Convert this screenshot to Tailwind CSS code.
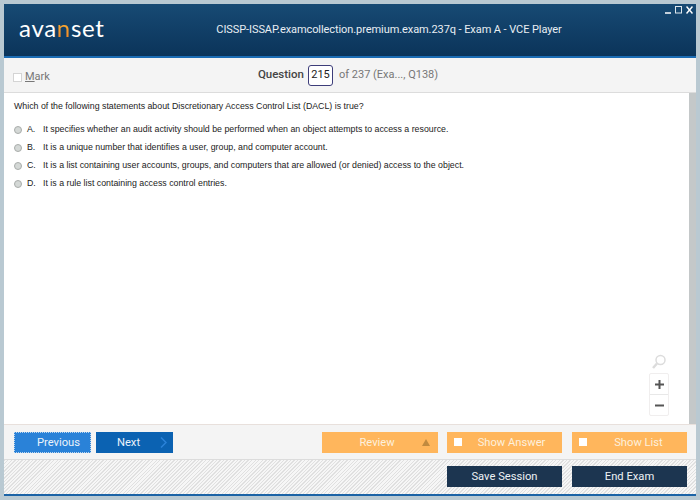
<!DOCTYPE html>
<html lang="en">
<head>
    <meta charset="UTF-8">
    <title>VCE Player</title>
    <script src="https://cdn.jsdelivr.net/npm/@tailwindcss/browser@4"></script>
</head>
<body class="w-[700px] h-[500px] overflow-hidden bg-[#b9c9d2] font-['Roboto',sans-serif]">
    <div class="h-[500px] pt-1 pl-1 pr-1 pb-[4px] flex flex-col">
        <!-- title bar -->
        <header class="relative h-[54px] shrink-0 flex items-center bg-gradient-to-b from-[#174a74] to-[#0b345a] border-b-2 border-[#1b6cb4]">
            <div class="w-[212px] pl-[15px] text-[24px] leading-none text-white font-['Lato',sans-serif] font-normal tracking-[0.7px] pb-1">ava<span class="text-transparent bg-clip-text bg-gradient-to-b from-[#f9c23c] to-[#ef7d22]">n</span>set</div>
            <div class="w-[346px] pt-[1px] text-center text-[11px] tracking-[-0.08px] text-[#e8eef3] whitespace-nowrap">CISSP-ISSAP.examcollection.premium.exam.237q - Exam A - VCE Player</div>
            <div class="absolute top-[2px] right-[3px] flex items-center gap-[4px]">
                <svg width="6" height="8" viewBox="0 0 6 8"><path d="M0 7h6" stroke="#fff" stroke-width="1.5"/></svg>
                <svg width="7" height="8" viewBox="0 0 7 8"><rect x="0.5" y="0.5" width="6" height="6.5" fill="none" stroke="#dfe8ee"/></svg>
                <svg width="7" height="8" viewBox="0 0 7 8"><path d="M0.5 0.5l6 7M6.5 0.5l-6 7" stroke="#fff" stroke-width="1.5"/></svg>
            </div>
        </header>

        <!-- question toolbar -->
        <div class="relative h-[35px] shrink-0 flex items-center justify-center bg-[#f4f4f4] border-b border-[#dcdcdc]">
            <div class="absolute left-[9px] top-[11px] flex items-center gap-[3px] text-[11px] text-[#777]">
                <span class="w-[9px] h-[9px] bg-white border border-[#d4d4d4]"></span>
                <span><u>M</u>ark</span>
            </div>
            <div class="flex items-center text-[11px] text-[#777] ml-[-4px]">
                <span class="text-[11.5px] font-medium text-[#444]">Question</span>
                <span class="ml-[4px] w-[25px] h-[21px] flex items-center justify-center bg-white border border-[#3d3d7a] rounded-[3px] text-[#222]">215</span>
                <span class="ml-[6px]">of 237 (Exa..., Q138)</span>
            </div>
        </div>

        <!-- question body -->
        <main class="relative flex-1 flex bg-white min-h-0">
            <div class="flex-1 pl-[10px] pt-[7px] font-['Liberation_Sans',sans-serif] text-[8.8px] text-[#222]">
                <p class="h-[21px] leading-[13px]">Which of the following statements about Discretionary Access Control List (DACL) is true?</p>
                <div class="flex flex-col">
                    <div class="h-[18px] flex items-center gap-[5px]"><span class="w-[8px] h-[8px] rounded-full bg-[#d4d8d6] border border-[#a9adab]"></span><span class="w-[10px]">A.</span><span class="ml-[1px]">It specifies whether an audit activity should be performed when an object attempts to access a resource.</span></div>
                    <div class="h-[18px] flex items-center gap-[5px]"><span class="w-[8px] h-[8px] rounded-full bg-[#d4d8d6] border border-[#a9adab]"></span><span class="w-[10px]">B.</span><span class="ml-[1px]">It is a unique number that identifies a user, group, and computer account.</span></div>
                    <div class="h-[18px] flex items-center gap-[5px]"><span class="w-[8px] h-[8px] rounded-full bg-[#d4d8d6] border border-[#a9adab]"></span><span class="w-[10px]">C.</span><span class="ml-[1px]">It is a list containing user accounts, groups, and computers that are allowed (or denied) access to the object.</span></div>
                    <div class="h-[18px] flex items-center gap-[5px]"><span class="w-[8px] h-[8px] rounded-full bg-[#d4d8d6] border border-[#a9adab]"></span><span class="w-[10px]">D.</span><span class="ml-[1px]">It is a rule list containing access control entries.</span></div>
                </div>
            </div>
            <!-- zoom controls -->
            <div class="absolute right-[27px] bottom-[8px] flex flex-col items-center">
                <svg width="16" height="16" viewBox="0 0 16 16" class="mb-[3px]"><circle cx="9.5" cy="6" r="4.5" fill="none" stroke="#dcdcdc" stroke-width="1.5"/><path d="M6 9.5L2 14" stroke="#dcdcdc" stroke-width="2.5"/></svg>
                <div class="w-[20px] h-[43px] bg-white border border-[#f0eeee] rounded-[2px] flex flex-col text-[#555]">
                    <div class="h-[21px] border-b border-[#e8e8e8] flex items-center justify-center"><svg width="9" height="9" viewBox="0 0 9 9"><path d="M4.5 0v9M0 4.5h9" stroke="#555" stroke-width="2"/></svg></div>
                    <div class="flex-1 flex items-center justify-center"><svg width="9" height="9" viewBox="0 0 9 9"><path d="M0 4.5h9" stroke="#555" stroke-width="2"/></svg></div>
                </div>
            </div>
            <div class="w-[7px] bg-[#c4c8c9]"></div>
        </main>

        <!-- navigation buttons -->
        <div class="h-[36px] shrink-0 flex items-center pl-[10px] pr-[9px] bg-[#f4f4f4] border-t border-[#e8e0dc] border-b border-b-[#dcdcdc] text-[11.2px]">
            <button class="w-[77px] h-[21px] pt-[2px] bg-[#2a82d8] text-[#eaf3fb] border border-dotted border-[#bcd6ee] pl-[12px] text-center">Previous</button>
            <button class="relative w-[77px] h-[21px] pt-[2px] ml-[5px] bg-[#0b62b2] text-[#eaf3fb] pr-[12px] text-center">Next<svg class="absolute right-[6px] top-[5px]" width="7" height="11" viewBox="0 0 7 11"><path d="M1 0.5l5 5-5 5" fill="none" stroke="#2a82d8" stroke-width="1.5"/></svg></button>
            <button class="relative w-[116px] h-[21px] pt-[2px] ml-[149px] bg-[#ffb65c] text-[#fdf0dd] pr-[6px] text-center">Review<span class="absolute right-[2px] top-[7px] w-0 h-0 mr-[6px] border-x-[4px] border-x-transparent border-b-[7px] border-b-[#c18a3f]"></span></button>
            <button class="relative w-[115px] h-[21px] pt-[2px] ml-[9px] bg-[#ffb65c] text-[#fdf0dd] pl-[14px] text-center"><span class="absolute left-[7px] top-[6px] w-[8px] h-[8px] bg-white"></span>Show Answer</button>
            <button class="relative w-[115px] h-[21px] pt-[2px] ml-[10px] bg-[#ffb65c] text-[#fdf0dd] pl-[18px] text-center"><span class="absolute left-[7px] top-[6px] w-[8px] h-[8px] bg-white"></span>Show List</button>
        </div>

        <!-- session buttons -->
        <div class="h-[36px] shrink-0 flex items-start justify-end pt-[6px] pr-[9px] gap-[10px] bg-[repeating-linear-gradient(135deg,#e0e0e0_0,#e0e0e0_1px,#f6f6f6_1px,#f6f6f6_2.5px)] border-b-2 border-[#1b63a6] text-[11.2px]">
            <button class="w-[115px] h-[21px] pt-[2px] bg-[#1c3550] text-[#eef2f5]">Save Session</button>
            <button class="w-[115px] h-[21px] pt-[2px] bg-[#1c3550] text-[#eef2f5]">End Exam</button>
        </div>
    </div>
</body>
</html>
